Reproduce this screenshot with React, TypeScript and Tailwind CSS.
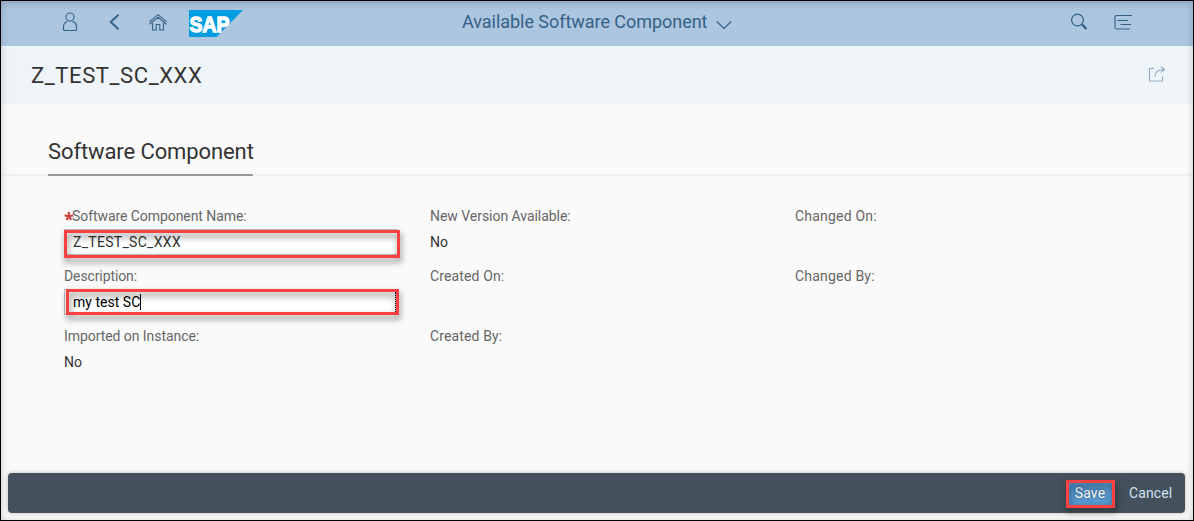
import React from "react";

type FieldProps = { label: string; value?: string; required?: boolean; tracking: string; children?: React.ReactNode };

function Field({ label, value, required, tracking, children }: FieldProps) {
  return (
    <div className="h-[60px]">
      <div className="flex h-5 items-center whitespace-nowrap text-[#666]">
        {required && <span className="w-2 pt-[5px] font-['Noto_Sans',sans-serif] text-[18px] leading-none font-bold text-[#cc3b3b]">*</span>}
        <span className={tracking}>{label}</span>
      </div>
      {value && <div className="flex h-8 items-center text-[#333]">{value}</div>}
      {children}
    </div>
  );
}

const outline = "pointer-events-none absolute border-3 border-[#fa4141] drop-shadow-[1px_4px_3px_rgba(0,0,0,0.5)]";

export default function App() {
  return (
    <div className="relative flex h-[521px] w-[1194px] flex-col overflow-hidden border border-black bg-[#fafafa] font-['Roboto','Liberation_Sans',sans-serif] text-[14px]">
      <header className="flex h-[45px] shrink-0 items-center bg-[#adc6e0] text-[#346187]">
        <div className="flex w-[400px] items-center pb-[3px]">
          <svg className="ml-[61px] h-5 w-4" viewBox="0 0 16 20" fill="none" stroke="currentColor" strokeWidth="1.1">
            <circle cx="8" cy="5" r="4" />
            <path d="M5.5 9.5C2.6 10.3 1.5 12.5 1.5 15v2.5q0 1 1 1h11q1 0 1-1V15c0-2.5-1.1-4.7-4-5.5" />
          </svg>
          <svg className="ml-[30px] h-5 w-3" viewBox="0 0 12 20" fill="none" stroke="currentColor" strokeWidth="1.9">
            <path d="M10.5 2.7 2.7 10l7.8 7.3" />
          </svg>
          <svg className="ml-[28px] h-5 w-5" viewBox="0 0 20 20" fill="none" stroke="currentColor" strokeWidth="1.1">
            <path d="m1.3 9.8 8.7-7.2 8.7 7.2M1.5 12.2 10 5.3l8.5 6.9M4.5 11v7h3.7v-5.5h3.6V18h3.7v-7" />
          </svg>
          <svg className="ml-[21px] mt-[3px] h-[27px] w-[54px]" viewBox="0 0 54 27">
            <path d="M0 0h54L27.5 27H0z" fill="#009de0" />
            <text x="0.6" y="22" textLength="40" lengthAdjust="spacingAndGlyphs" fill="white" stroke="white" strokeWidth="1.4" fontFamily="Liberation Sans" fontWeight="700" fontSize="22.5">SAP</text>
          </svg>
        </div>
        <div className="ml-[61px] flex w-[400px] items-center pb-[4px]">
          <span className="w-[246px] whitespace-nowrap text-[18px] tracking-[-0.04px]">Available Software Component</span>
          <svg className="ml-2 mt-[6px] h-3 w-4" viewBox="0 0 16 12" fill="none" stroke="currentColor" strokeWidth="1.2">
            <path d="m.8 2.5 7.2 7 7.2-7" />
          </svg>
        </div>
        <div className="ml-auto mr-[60px] flex items-center gap-[25px] pb-[3px]">
          <svg className="h-5 w-[18px]" viewBox="0 0 18 20" fill="none" stroke="currentColor">
            <circle cx="7.5" cy="8" r="5.9" strokeWidth="1.2" />
            <path d="m11.5 12 5 5" strokeWidth="2.4" />
          </svg>
          <svg className="h-5 w-5" viewBox="0 0 20 20" fill="none" stroke="currentColor" strokeWidth="1.1">
            <path d="M19 3.5H3.5q-1.5 0-1.5 1.5v10.5q0 1.5 1.5 1.5H17M4.5 8.5H15M7.5 12.5H18" />
          </svg>
        </div>
      </header>

      <div className="flex h-[58px] shrink-0 items-center justify-between bg-[#eff4f9] pr-[27px] pl-[30px]">
        <h1 className="pt-px text-[22px] tracking-[0.6px] text-[#333]">Z_TEST_SC_XXX</h1>
        <svg className="mb-0.5 h-[18px] w-[18px]" viewBox="0 0 18 18" fill="none" stroke="#91abc2" strokeWidth="1.1">
          <path d="M6 3.5H1.5v12.5h13V11.5M7 12c0-4.8 2.5-7.5 9-7.5M12.8 1.5l3.7 3-3.7 3.2" />
        </svg>
      </div>

      <main className="flex-1">
        <div className="flex h-[72px] border-b-2 border-[#f1f1f1] pl-[47px]">
          <h2 className="-mb-0.5 h-[72px] w-[205px] border-b-2 border-[#999] pt-[32px] text-[22px] leading-8 tracking-[-0.1px] whitespace-nowrap text-[#333]">
            Software Component
          </h2>
        </div>
        <div className="grid grid-cols-[366px_365px_300px] pt-[30px] pl-[63px]">
          <section>
            <Field label="Software Component Name:" required tracking="tracking-[-0.07px]">
              <div className="relative mt-[3px] h-[26px] w-[334px] border border-[#bfbfbf] bg-white">
                <span className="block pl-2 leading-[24px] tracking-[0.3px] text-[#333]">Z_TEST_SC_XXX</span>
                <div className={`${outline} -top-0 -left-px h-7 w-[336px]`} />
              </div>
            </Field>
            <Field label="Description:" tracking="tracking-[-0.11px]">
              <div className="relative mt-[3px] h-[26px] w-[334px] border border-[#bfbfbf] bg-white">
                <div className="flex h-6 items-center pl-2 text-black">
                  <span className="tracking-[0.02px]">my test SC</span>
                  <span className="h-4 w-px bg-black" />
                </div>
                <div className="absolute top-0.5 right-px h-5 border-r border-dotted border-black" />
                <div className={`${outline} -top-px left-px h-[26px] w-[333px]`} />
              </div>
            </Field>
            <Field label="Imported on Instance:" value="No" tracking="tracking-[-0.06px]" />
          </section>
          <section>
            <Field label="New Version Available:" value="No" tracking="tracking-[-0.04px]" />
            <Field label="Created On:" tracking="tracking-[0.13px]" />
            <Field label="Created By:" tracking="tracking-[0.13px]" />
          </section>
          <section>
            <Field label="Changed On:" tracking="tracking-[0.2px]" />
            <Field label="Changed By:" tracking="tracking-[0.2px]" />
          </section>
        </div>
      </main>

      <footer className="mr-2 mb-[7px] ml-[7px] flex h-10 shrink-0 items-center justify-end rounded bg-[#44505b] pr-[13px] text-[#d0e3f4] shadow-[0_0_4px_rgba(0,0,0,0.25)]">
        <button className="relative mt-0.5 flex h-7 w-[49px] items-center justify-center bg-[#5496cd] pr-px pb-0.5 tracking-[0.2px] text-white [text-shadow:0_0_2px_rgba(0,0,0,0.6)]">
          Save
          <span className={`${outline} inset-0`} />
        </button>
        <button className="ml-[14px] w-[43px] tracking-[0.1px] whitespace-nowrap">Cancel</button>
      </footer>
      <div className="pointer-events-none absolute inset-0 shadow-[inset_0_2px_7px_rgba(60,60,80,0.3)]" />
    </div>
  );
}
